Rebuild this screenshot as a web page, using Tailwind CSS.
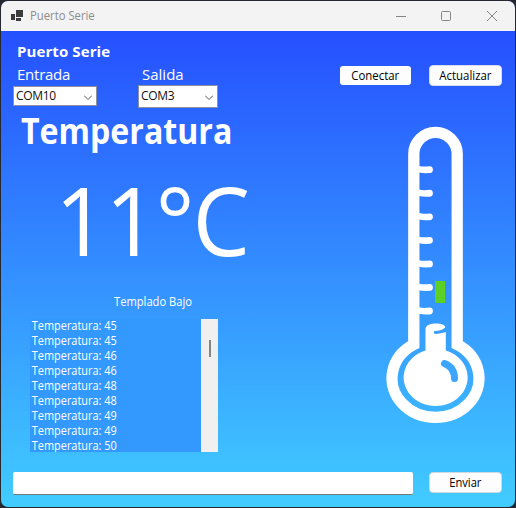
<!DOCTYPE html>
<html lang="es">
<head>
<meta charset="utf-8">
<title>Puerto Serie</title>
<script src="https://cdn.jsdelivr.net/npm/@tailwindcss/browser@4"></script>
</head>
<body class="w-[516px] h-[508px] overflow-hidden bg-[#25282e] p-px font-['Open_Sans','Noto_Sans',sans-serif] text-[12px] whitespace-nowrap">
<div class="w-[514px] h-[506px] rounded-[7px] overflow-hidden flex flex-col bg-linear-to-b/srgb from-[#2448ff] to-[#41ccff]">
  <header class="h-[30px] shrink-0 bg-[#f3f3f3] flex items-center text-[#8c8c8c]">
    <svg class="ml-[10px] w-3 h-3 shrink-0" viewBox="0 0 12 12" fill="#3b3b3b"><path d="M5 0h7v7H5zM0 4h4v6H0zM5 8h5v3H5z"/></svg>
    <span class="ml-[7px] flex-1 origin-left scale-x-[0.94]">Puerto Serie</span>
    <svg class="w-[103px] h-[12px] mr-[16px]" viewBox="0 0 103 12" fill="none" stroke="#858585"><path d="M0 6.5h10"/><rect x="45.5" y="1.5" width="9" height="9" rx="1"/><path d="M91 1l10 10M101 1L91 11"/></svg>
  </header>
  <main class="h-[441px] shrink-0 flex">
    <section class="w-[325px] pl-3 flex flex-col">
      <h2 class="mt-[10px] ml-1 h-[20px] leading-[20px] text-[15px] font-bold text-white tracking-[0.1px]">Puerto Serie</h2>
      <div class="flex text-white text-[15px] h-[24px] leading-[24px] mt-px">
        <label class="ml-1 w-[125px] tracking-[-0.25px]">Entrada</label><label>Salida</label>
      </div>
      <div class="flex items-start text-[#111] h-[24px] -mt-px">
        <div class="mt-[1px] w-[84px] h-[20px] bg-white border border-[#8b91a0] pl-[2px] pr-1 flex items-center justify-between"><span class="tracking-[-0.35px]">COM10</span>
          <svg class="w-[8px] h-[5px] mt-[3px]" viewBox="0 0 8 5" fill="none" stroke="#555"><path d="M0 .5l4 4 4-4"/></svg></div>
        <div class="ml-[41px] w-[80px] h-[23px] bg-white border border-[#8b91a0] pl-[2px] pr-1 flex items-center justify-between"><span class="-mt-[2px] tracking-[-0.35px]">COM3</span>
          <svg class="w-[8px] h-[5px] mt-[2px]" viewBox="0 0 8 5" fill="none" stroke="#555"><path d="M0 .5l4 4 4-4"/></svg></div>
      </div>
      <h1 class="ml-[8px] h-[44px] leading-[44px] text-[35px] font-bold text-white origin-left scale-x-[0.917]">Temperatura</h1>
      <div class="ml-[42px] h-[130px] leading-[130px] text-[95px] text-white tracking-[-2px] mt-px mb-[6px] origin-left scale-x-[0.96]">11°C</div>
      <p class="ml-[101px] h-[18px] leading-[18px] text-white mt-[3px] origin-left scale-x-[0.93]">Templado Bajo</p>
      <div class="ml-[17px] mt-[8px] w-[188px] h-[133px] shrink-0 bg-[#3399ff] flex overflow-hidden text-white">
        <ul class="flex-1 pl-[2px] leading-[15px] -mt-px origin-left scale-x-[0.91]">
          <li>Temperatura: 45</li><li>Temperatura: 45</li><li>Temperatura: 46</li><li>Temperatura: 46</li><li>Temperatura: 48</li><li>Temperatura: 48</li><li>Temperatura: 49</li><li>Temperatura: 49</li><li>Temperatura: 50</li>
        </ul>
        <div class="w-[17px] bg-[#f0f0f0] pt-[21px] pl-[8px]"><div class="w-[2px] h-[17px] bg-[#858585]"></div></div>
      </div>
    </section>
    <section class="flex-1 flex flex-col">
      <div class="flex items-center pt-[34px] ml-[14px] gap-[18px] text-black">
        <button class="w-[71px] h-[19px] rounded-[3px] bg-[#fdfdfd] flex items-center justify-center"><span class="scale-x-[0.95]">Conectar</span></button>
        <button class="w-[73px] h-[21px] rounded-[4px] bg-[#fdfdfd] border border-[#d5dcf0] flex items-center justify-center"><span class="scale-x-[0.95]">Actualizar</span></button>
      </div>
      <svg class="mt-[40px] ml-[59px] w-[102px] h-[300px] shrink-0" viewBox="385 126 102 300">
        <path d="M413.8 344.6V154a21.7 21.7 0 0 1 43.4 0V344.6A43.5 39 0 1 1 413.8 344.6Z" fill="none" stroke="#fff" stroke-width="11.3"/>
        <g fill="#fff">
          <path id="tick" d="M419 166q4 1 10.5.3a3.4 3.4 0 0 1 0 6.8q-6 .5-10.5-.6z"/>
          <use href="#tick" y="23.55"/><use href="#tick" y="47.1"/><use href="#tick" y="70.65"/><use href="#tick" y="94.2"/><use href="#tick" y="117.75"/><use href="#tick" y="141.3"/>
        </g>
        <path d="M425.5 329c0-7 19.5-7 19.8-1.5-3 2.7-7 3.3-10.3 3.4-2 .3-1.5 3 .5 3 3.5 0 7-.6 10.3-1.8V350.5A32 28.5 0 1 1 425.5 350.5Z" fill="#fff"/>
        <path d="M444.5 363.5Q454.5 367.5 454.5 378.5" fill="none" stroke="#3ba5ff" stroke-width="7" stroke-linecap="round"/>
        <path d="M435 281h10v22h-10z" fill="#5cd024"/>
      </svg>
    </section>
  </main>
  <footer class="flex gap-4 pl-3 text-black">
    <input class="w-[400px] h-[23px] bg-white rounded-[2px] border-b border-[#777]" aria-label="Mensaje">
    <button class="w-[73px] h-[21px] rounded-[4px] bg-[#fdfdfd] border border-[#d0d8e0] flex items-center justify-center"><span class="scale-x-[0.93]">Enviar</span></button>
  </footer>
</div>
</body>
</html>
